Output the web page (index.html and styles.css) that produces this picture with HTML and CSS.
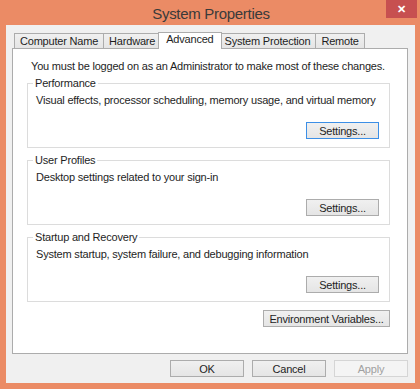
FILE: index.html
```html
<!DOCTYPE html>
<html lang="en">
<head>
    <meta charset="UTF-8">
    <title>System Properties</title>
    <link rel="stylesheet" href="styles.css">
</head>
<body>
    <div class="window">
        <div class="titlebar">
            <span></span>
            <span class="title">System Properties</span>
            <button class="close">&#x2715;</button>
        </div>
        <div class="client">
            <div class="tabs">
                <div class="tab">Computer Name</div>
                <div class="tab">Hardware</div>
                <div class="tab active">Advanced</div>
                <div class="tab">System Protection</div>
                <div class="tab">Remote</div>
            </div>
            <div class="panel">
                <p class="intro">You must be logged on as an Administrator to make most of these changes.</p>

                <fieldset class="group">
                    <legend>Performance</legend>
                    <p class="desc">Visual effects, processor scheduling, memory usage, and virtual memory</p>
                    <div class="group-actions">
                        <button class="btn focused">Settings...</button>
                    </div>
                </fieldset>

                <fieldset class="group">
                    <legend>User Profiles</legend>
                    <p class="desc">Desktop settings related to your sign-in</p>
                    <div class="group-actions">
                        <button class="btn">Settings...</button>
                    </div>
                </fieldset>

                <fieldset class="group">
                    <legend>Startup and Recovery</legend>
                    <p class="desc">System startup, system failure, and debugging information</p>
                    <div class="group-actions">
                        <button class="btn">Settings...</button>
                    </div>
                </fieldset>

                <div class="panel-actions">
                    <button class="btn wide">Environment Variables...</button>
                </div>
            </div>
            <div class="dialog-actions">
                <button class="btn">OK</button>
                <button class="btn">Cancel</button>
                <button class="btn" disabled>Apply</button>
            </div>
        </div>
    </div>
</body>
</html>
```

FILE: styles.css
```css
body{
    margin: 0;
    font-family: "Liberation Sans", Arial, sans-serif;
    font-size: 11px;
    letter-spacing: -0.2px;
    color: #1e1e1e;
}
.window{
    width: 420px;
    height: 389px;
    background: #eb8b65;
    display: flex;
    flex-direction: column;
    box-sizing: border-box;
}
.titlebar{
    height: 25px;
    display: grid;
    grid-template-columns: 1fr auto 1fr;
    align-items: start;
}
.title{
    font-size: 15px;
    letter-spacing: -0.3px;
    color: #3a3a3a;
    line-height: 27px;
    padding-left: 2px;
}
.close{
    justify-self: end;
    width: 31px;
    height: 18px;
    margin-right: 3px;
    border: none;
    padding: 0;
    background: #c75050;
    color: #fff;
    font-size: 11px;
    font-weight: bold;
    line-height: 18px;
}
.client{
    flex: 1;
    margin: 0 5px 6px 6px;
    background: #f0f0f0;
    padding: 7px 7px 0 6px;
    display: flex;
    flex-direction: column;
}
.tabs{
    display: flex;
    align-items: flex-end;
    height: 17px;
    padding-left: 2px;
    margin-bottom: -1px;
    position: relative;
    z-index: 1;
    white-space: nowrap;
}
.tab{
    box-sizing: border-box;
    height: 16px;
    padding: 0 5px;
    line-height: 15px;
    border: 1px solid #acacac;
    background: linear-gradient(#f0f0f0, #e5e5e5);
    margin-left: -1px;
}
.tab:first-child{
    margin-left: 0;
}
.tab.active{
    height: 17px;
    background: #fff;
    border-bottom: none;
    padding: 0 7px;
    margin: 0 -2px 0 -3px;
    line-height: 13px;
    position: relative;
    z-index: 2;
}
.panel{
    flex: 1;
    background: #fff;
    border: 1px solid #acacac;
    padding: 0 17px 0 14px;
    white-space: nowrap;
}
.intro{
    margin: 10px 0 3px 4px;
    line-height: 14px;
}
.group{
    margin: 0 0 5px 0;
    border: 1px solid #dcdcdc;
    padding: 3px 10px 8px 8px;
}
.group + .group{
    margin-top: 1px;
}
.group legend{
    padding: 0 2px;
    margin-left: -3px;
    line-height: 14px;
}
.desc{
    margin: 0;
    line-height: 14px;
}
.group-actions, .panel-actions{
    display: flex;
    justify-content: flex-end;
}
.group-actions{
    margin-top: 15px;
}
.panel-actions{
    margin-top: 8px;
}
.btn{
    box-sizing: border-box;
    width: 73px;
    height: 17px;
    padding: 0;
    font-family: inherit;
    font-size: 11px;
    letter-spacing: -0.2px;
    color: #1e1e1e;
    border: 1px solid #acacac;
    background: linear-gradient(#f0f0f0, #e5e5e5);
}
.btn.focused{
    border-color: #3c8fe6;
}
.btn.wide{
    width: 127px;
}
.btn:disabled{
    color: #a0a0a0;
    border-color: #d5d5d5;
    background: #f4f4f4;
}
.dialog-actions{
    display: flex;
    justify-content: flex-end;
    gap: 8px;
    padding: 6px 0 6px;
}
.dialog-actions .btn{
    width: 74px;
}
```
